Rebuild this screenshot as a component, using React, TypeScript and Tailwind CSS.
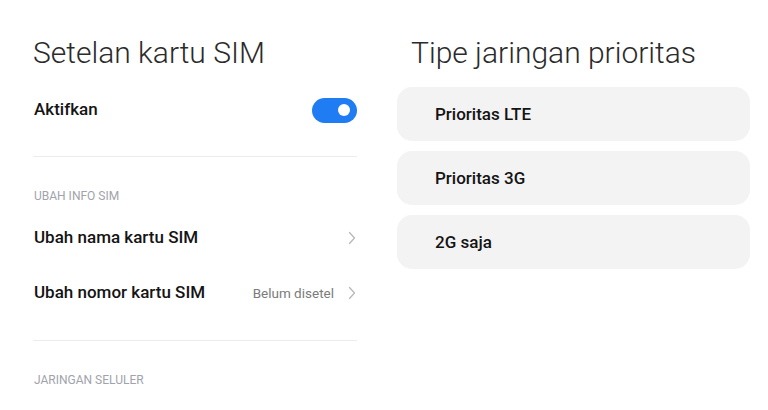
import React from 'react';

function Chevron() {
  return (
    <svg width="8" height="14" viewBox="0 0 8 14" fill="none" className="shrink-0">
      <polyline points="1.5,1.5 6.5,7 1.5,12.5" stroke="#b8b8b8" strokeWidth="1.3" strokeLinecap="round" strokeLinejoin="round" />
    </svg>
  );
}

function Toggle() {
  return (
    <div className="flex h-[25px] w-[45px] items-center justify-end rounded-full bg-[#1f7cf3] pr-[7px]">
      <div className="h-[12px] w-[12px] rounded-full bg-white" />
    </div>
  );
}

function SectionLabel({ children }: { children: React.ReactNode }) {
  return (
    <div className="flex h-[20px] items-center text-[12px] text-[#a1a3ac]">
      {children}
    </div>
  );
}

interface RowProps {
  label: string;
  value?: string;
  className?: string;
}
function Row({ label, value, className }: RowProps) {
  return (
    <div className={`flex h-[44px] items-center justify-between ${className || ''}`}>
      <span className="text-[17px] font-medium text-[#141414]">{label}</span>
      <div className="flex items-center gap-[14px] pr-[1px]">
        {value && <span className="text-[13.5px] text-[#7b7b7b]">{value}</span>}
        <Chevron />
      </div>
    </div>
  );
}

function NetworkOption({ children }: { children: React.ReactNode }) {
  return (
    <div className="flex h-[54px] items-center rounded-[15px] bg-[#f3f3f3] pl-[38px] pt-[2px] text-[17px] font-medium text-[#141414]">
      {children}
    </div>
  );
}

export default function App() {
  return (
    <div
      className="flex h-[410px] w-[768px] gap-[40px] overflow-hidden bg-white pl-[33px] pt-[32px]"
      style={{ fontFamily: 'Roboto, "Noto Sans", sans-serif' }}
    >
      <div className="flex w-[324px] flex-col">
        <div className="flex h-[40px] items-center text-[30px] font-light text-[#2b2b2b]">
          Setelan kartu SIM
        </div>
        <div className="mt-[16px] flex h-[44px] items-center justify-between">
          <span className="pl-[1px] text-[17px] font-medium text-[#141414]">Aktifkan</span>
          <Toggle />
        </div>
        <div className="mt-[24px] h-px bg-[#ececec]" />
        <div className="mt-[29px] pl-[1px]">
          <SectionLabel>UBAH INFO SIM</SectionLabel>
        </div>
        <Row className="mt-[10px] pl-[1px]" label="Ubah nama kartu SIM" />
        <Row className="mt-[11px] pl-[1px]" label="Ubah nomor kartu SIM" value="Belum disetel" />
        <div className="mt-[25px] h-px bg-[#ececec]" />
        <div className="mt-[29px] pl-[1px]">
          <SectionLabel>JARINGAN SELULER</SectionLabel>
        </div>
      </div>

      <div className="flex w-[353px] flex-col">
        <div className="flex h-[40px] items-center pl-[14px] text-[30px] font-light text-[#2b2b2b]">
          Tipe jaringan prioritas
        </div>
        <div className="mt-[15px] flex flex-col gap-[10px]">
          <NetworkOption>Prioritas LTE</NetworkOption>
          <NetworkOption>Prioritas 3G</NetworkOption>
          <NetworkOption>2G saja</NetworkOption>
        </div>
      </div>
    </div>
  );
}
